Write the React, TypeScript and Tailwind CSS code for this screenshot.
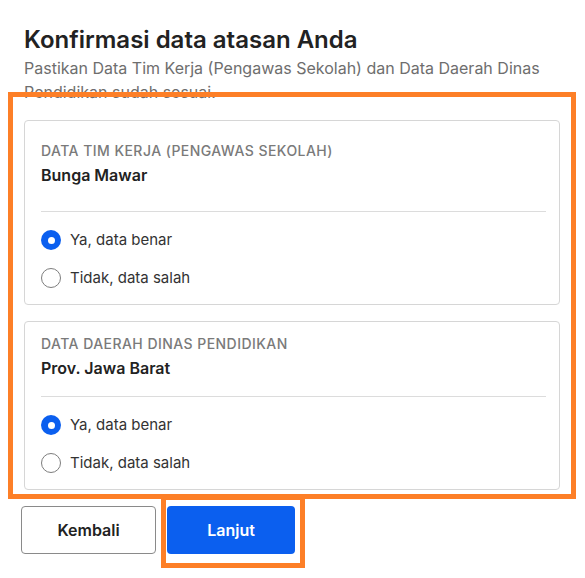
import React, { useState } from "react";

type Choice = "ya" | "tidak";

const Radio = ({
	checked,
	label,
	onClick,
}: {
	checked: boolean;
	label: string;
	onClick: () => void;
}) => {
	return (
		<button
			type="button"
			onClick={onClick}
			className="flex items-center gap-[9px] h-6 text-left"
		>
			{checked ? (
				<span className="w-5 h-5 rounded-full bg-[#0b5fef] flex items-center justify-center">
					<span className="w-[7px] h-[7px] rounded-full bg-white" />
				</span>
			) : (
				<span className="w-5 h-5 rounded-full border border-[#7d7d7d] bg-white" />
			)}
			<span className="text-[15px] text-[#333333]">{label}</span>
		</button>
	);
};

const DataCard = ({
	label,
	value,
	top,
	headBottom,
}: {
	label: string;
	value: string;
	top: string;
	headBottom: string;
}) => {
	const [choice, setChoice] = useState<Choice>("ya");
	return (
		<div className="border border-[#d6d6d6] rounded-[4px] bg-white">
			<div className={`pl-4 pr-[13px] ${top}`}>
				<div className={`border-b border-[#dcdcdc] ${headBottom}`}>
					<p className="text-sm leading-5 font-medium uppercase tracking-[0.45px] text-[#7a7a7a]">
						{label}
					</p>
					<p className="mt-0.5 text-base leading-6 font-semibold text-[#222222]">
						{value}
					</p>
				</div>
			</div>
			<div className="px-4 pt-4 pb-[14px] flex flex-col gap-[14px]">
				<Radio
					checked={choice === "ya"}
					label="Ya, data benar"
					onClick={() => setChoice("ya")}
				/>
				<Radio
					checked={choice === "tidak"}
					label="Tidak, data salah"
					onClick={() => setChoice("tidak")}
				/>
			</div>
		</div>
	);
};

const App = () => {
	return (
		<div
			className="w-[585px] min-h-[578px] bg-white pl-6 pt-6"
			style={{ fontFamily: "Inter, 'Noto Sans', sans-serif" }}
		>
			<div className="w-[536px]">
				<h1 className="text-2xl leading-8 font-semibold text-[#222222]">
					Konfirmasi data atasan Anda
				</h1>
				<p className="text-base leading-6 text-[#6e6e6e]">
					Pastikan Data Tim Kerja (Pengawas Sekolah) dan Data Daerah Dinas
					Pendidikan sudah sesuai.
				</p>

				<div className="relative mt-4 flex flex-col gap-4">
					<DataCard
						label="Data Tim Kerja (Pengawas Sekolah)"
						value="Bunga Mawar"
						top="pt-5"
						headBottom="pb-6"
					/>
					<DataCard
						label="Data Daerah Dinas Pendidikan"
						value="Prov. Jawa Barat"
						top="pt-3"
						headBottom="pb-4"
					/>
					<div className="absolute -left-4 -right-4 -top-[28px] -bottom-[9px] border-[5px] border-[#fd7f27] pointer-events-none" />
				</div>

				<div className="mt-4 -ml-[3px] flex gap-[11px]">
					<button
						type="button"
						className="w-[135px] h-12 rounded-[4px] border border-[#8a8a8a] bg-white text-base font-semibold text-[#222222]"
					>
						Kembali
					</button>
					<div className="relative">
						<button
							type="button"
							className="w-[128px] h-12 rounded-[4px] bg-[#0b5fef] text-base font-semibold text-white"
						>
							Lanjut
						</button>
						<div className="absolute -left-[6px] -right-[10px] -top-[11px] -bottom-[14px] border-[5px] border-[#fd7f27] pointer-events-none" />
					</div>
				</div>
			</div>
		</div>
	);
};

export default App;
